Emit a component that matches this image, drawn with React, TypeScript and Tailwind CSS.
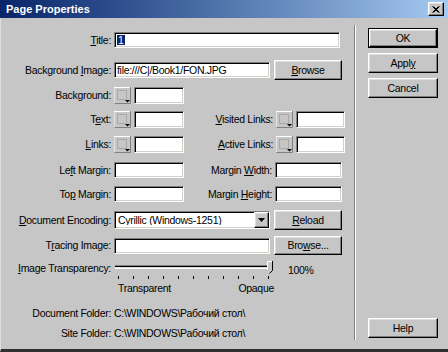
const sunken =
  "bg-white border border-t-[#808080] border-l-[#808080] border-b-white border-r-white shadow-[inset_1px_1px_0_#000,inset_-1px_-1px_0_#d4d0c8]";
const raised =
  "bg-[#c6c6c6] border border-t-white border-l-white border-b-black border-r-black shadow-[inset_-1px_-1px_0_#808080,inset_1px_1px_0_#dfdfdf]";

function Swatch() {
  return (
    <svg width="17" height="17" className="shrink-0">
      <rect x="0" y="0" width="17" height="17" fill="#c6c6c6" />
      <path d="M0 16.5V0.5H16.5" stroke="#fff" fill="none" />
      <path d="M0.5 16.5H16.5V0" stroke="#808080" fill="none" />
      <rect x="3.5" y="3.5" width="9" height="9" fill="none" stroke="#8a8a8a" strokeDasharray="1 1" />
      <path d="M11 13h5l-2.5 2.5z" fill="#000" />
    </svg>
  );
}

function Button({ children, className = "" }: { children: React.ReactNode; className?: string }) {
  return <div className={`${raised} flex items-center justify-center ${className}`}>{children}</div>;
}

function Slider() {
  const ticks = Array.from({ length: 11 }, (_, i) => 4 + i * 15);
  return (
    <svg width="160" height="22" className="shrink-0">
      <rect x="1" y="5" width="156" height="1" fill="#808080" />
      <rect x="1" y="6" width="156" height="1" fill="#000" />
      <rect x="1" y="7" width="156" height="1" fill="#dfdfdf" />
      <rect x="1" y="8" width="156" height="1" fill="#fff" />
      {ticks.map((x) => (
        <rect key={x} x={x} y="16" width="1" height="3" fill="#000" />
      ))}
      <polygon points="153,1 158,1 158,10 155.5,13 153,10" fill="#c6c6c6" />
      <path d="M153.5 10V1.5H158" stroke="#fff" fill="none" />
      <path d="M158.5 1V10.5L155.5 13.5" stroke="#000" fill="none" />
    </svg>
  );
}

export default function App() {
  return (
    <div className="w-[448px] h-[352px] overflow-hidden flex flex-col bg-[#c6c6c6] text-black text-[10.5px] tracking-[-0.3px] leading-none font-['Liberation_Sans',Arial,sans-serif]">
      {/* title bar */}
      <div className="h-[18px] shrink-0 flex items-center justify-between bg-linear-to-r from-[#0a246a] to-[#a6caf0] pl-[6px] pr-[4px]">
        <span className="text-white font-bold text-[11px] tracking-normal">Page Properties</span>
        <div className={`${raised} w-[16px] h-[14px] flex items-center justify-center`}>
          <svg width="8" height="7">
            <path d="M0.5 0.5l6 6M6.5 0.5l-6 6M1.5 0.5l6 6M7.5 0.5l-6 6" stroke="#000" />
          </svg>
        </div>
      </div>

      <div className="flex-1 flex border-l border-l-[#dfdfdf] border-b-[3px] border-b-[#303030]">
        {/* form */}
        <div className="w-[353px] flex flex-col">
          <div className="mt-[14px] h-[16px] flex items-center gap-[3px]">
            <span className="w-[110px] text-right"><u>T</u>itle:</span>
            <div className={`${sunken} w-[226px] h-[16px] flex items-center pl-[2px]`}>
              <span className="bg-[#0a246a] text-white px-[1px]">1</span>
            </div>
          </div>

          <div className="mt-[12px] h-[20px] flex items-center gap-[3px]">
            <span className="w-[110px] text-right">Background <u>I</u>mage:</span>
            <div className={`${sunken} w-[156px] h-[16px] flex items-center pl-[2px] overflow-hidden whitespace-nowrap`}>
              file:///C|/Book1/FON.JPG
            </div>
            <Button className="ml-[1px] w-[68px] h-[20px]"><span><u>B</u>rowse</span></Button>
          </div>

          <div className="mt-[7px] h-[17px] flex items-center gap-[3px]">
            <span className="w-[110px] text-right">Background:</span>
            <Swatch />
            <div className={`${sunken} w-[50px] h-[17px]`} />
          </div>

          <div className="mt-[7px] h-[17px] flex items-center gap-[3px]">
            <span className="w-[110px] text-right">T<u>e</u>xt:</span>
            <Swatch />
            <div className={`${sunken} w-[50px] h-[17px]`} />
            <span className="w-[86px] text-right"><u>V</u>isited Links:</span>
            <Swatch />
            <div className={`${sunken} w-[49px] h-[17px]`} />
          </div>

          <div className="mt-[8px] h-[17px] flex items-center gap-[3px]">
            <span className="w-[110px] text-right"><u>L</u>inks:</span>
            <Swatch />
            <div className={`${sunken} w-[50px] h-[17px]`} />
            <span className="w-[86px] text-right"><u>A</u>ctive Links:</span>
            <Swatch />
            <div className={`${sunken} w-[49px] h-[17px]`} />
          </div>

          <div className="mt-[9px] h-[16px] flex items-center gap-[3px]">
            <span className="w-[110px] text-right">Le<u>f</u>t Margin:</span>
            <div className={`${sunken} w-[70px] h-[16px]`} />
            <span className="w-[85px] text-right">Margin <u>W</u>idth:</span>
            <div className={`${sunken} w-[67px] h-[16px]`} />
          </div>

          <div className="mt-[8px] h-[16px] flex items-center gap-[3px]">
            <span className="w-[110px] text-right">To<u>p</u> Margin:</span>
            <div className={`${sunken} w-[70px] h-[16px]`} />
            <span className="w-[85px] text-right">Margin <u>H</u>eight:</span>
            <div className={`${sunken} w-[67px] h-[16px]`} />
          </div>

          <div className="mt-[8px] h-[20px] flex items-center gap-[3px]">
            <span className="w-[110px] text-right"><u>D</u>ocument Encoding:</span>
            <div className={`${sunken} w-[156px] h-[18px] flex items-center`}>
              <span className="flex-1 pl-[3px] whitespace-nowrap overflow-hidden">Cyrillic (Windows-1251)</span>
              <div className={`${raised} w-[15px] h-[16px] flex items-center justify-center`}>
                <svg width="7" height="4"><path d="M0 0h7L3.5 4z" fill="#000" /></svg>
              </div>
            </div>
            <Button className="ml-[1px] w-[68px] h-[20px]"><span><u>R</u>eload</span></Button>
          </div>

          <div className="mt-[6px] h-[19px] flex items-center gap-[3px]">
            <span className="w-[110px] text-right">T<u>r</u>acing Image:</span>
            <div className={`${sunken} w-[156px] h-[16px]`} />
            <Button className="ml-[1px] w-[68px] h-[19px]"><span>Bro<u>w</u>se...</span></Button>
          </div>

          <div className="mt-[5px] h-[22px] flex items-start gap-[3px]">
            <span className="w-[110px] text-right leading-[16px]"><u>I</u>mage Transparency:</span>
            <Slider />
            <span className="ml-[11px] leading-[20px]">100%</span>
          </div>

          <div className="h-[12px] flex items-center gap-[3px]">
            <span className="w-[110px]" />
            <div className="w-[160px] pl-[4px] flex justify-between">
              <span>Transparent</span>
              <span>Opaque</span>
            </div>
          </div>

          <div className="mt-[12px] h-[14px] flex items-center gap-[3px]">
            <span className="w-[110px] text-right">Document Folder:</span>
            <span>C:\WINDOWS\Рабочий стол\</span>
          </div>

          <div className="mt-[6px] h-[14px] flex items-center gap-[3px]">
            <span className="w-[110px] text-right">Site Folder:</span>
            <span>C:\WINDOWS\Рабочий стол\</span>
          </div>
        </div>

        {/* separator */}
        <div className="mt-[7px] mb-[9px] w-[2px] border-l border-l-[#808080] border-r border-r-white" />

        {/* buttons */}
        <div className="flex-1 flex flex-col pl-[12px] pr-[10px] pt-[10px] pb-[11px]">
          <div className="border border-black">
            <Button className="h-[18px]">OK</Button>
          </div>
          <Button className="mt-[5px] h-[20px]"><span>Appl<u>y</u></span></Button>
          <Button className="mt-[5px] h-[20px]">Cancel</Button>
          <Button className="mt-auto h-[20px]">Help</Button>
        </div>
      </div>
    </div>
  );
}
